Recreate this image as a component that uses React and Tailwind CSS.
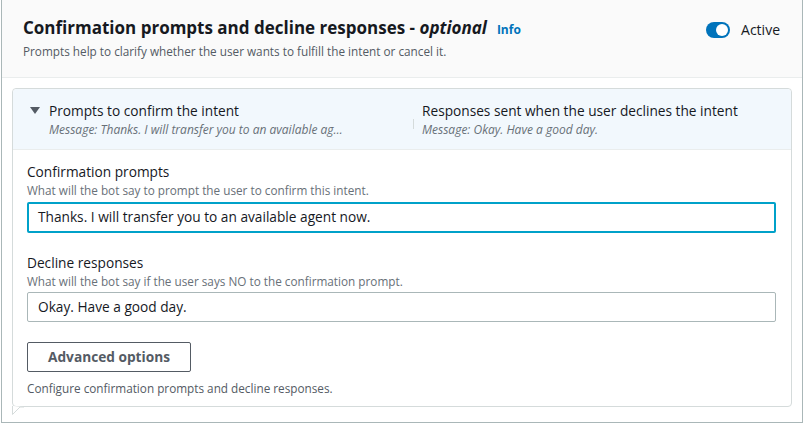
import React from 'react'

const font = { fontFamily: '"Open Sans", "Noto Sans", sans-serif' }

const Toggle = () => (
  <span className="relative inline-flex h-[16px] w-[24px] items-center rounded-full bg-[#0073bb]">
    <span className="absolute right-[2px] h-[12px] w-[12px] rounded-full bg-white" />
  </span>
)

const App = () => {
  return (
    <div className="h-[424px] w-[805px] bg-white" style={font}>
      <div className="ml-px h-[423px] w-[802px] border-x border-b border-[#aab7b8] bg-white">
        {/* header */}
        <div className="flex h-[78px] items-start justify-between border-b border-[#eaeded] bg-[#fafafa] pl-[21px] pr-[22px] pt-[15px]">
          <div>
            <h2 className="flex items-baseline text-[17px] font-bold leading-[26px] text-[#16191f]">
              Confirmation prompts and decline responses -&nbsp;<i>optional</i>
              <span className="ml-[10px] text-[12px] font-bold text-[#0073bb]">Info</span>
            </h2>
            <p className="text-[11.75px] leading-[16px] text-[#545b64]">
              Prompts help to clarify whether the user wants to fulfill the intent or cancel it.
            </p>
          </div>
          <div className="mt-[4px] flex items-center gap-[11px] text-[14px] text-[#16191f]">
            <Toggle />
            <span>Active</span>
          </div>
        </div>

        {/* card */}
        <div className="relative ml-[10px] mt-[10px] w-[780px] rounded-[4px] border border-[#d5dbdb] bg-white">
          <div className="flex h-[61px] items-start rounded-t-[4px] border-b border-[#eaeded] bg-[#f2f8fd] pt-[12px]">
            <div className="flex w-[400px] pl-[17px]">
              <span className="mr-[9px] mt-[6px] h-0 w-0 border-x-[5px] border-t-[7px] border-x-transparent border-t-[#545b64]" />
              <div>
                <div className="text-[13.7px] leading-[20px] text-[#16191f]">Prompts to confirm the intent</div>
                <div className="text-[12px] italic leading-[18px] text-[#687078]">
                  Message: Thanks. I will transfer you to an available ag…
                </div>
              </div>
            </div>
            <span className="mt-[18px] h-[10px] w-px bg-[#d5dbdb]" />
            <div className="pl-[8px]">
              <div className="text-[13.7px] leading-[20px] text-[#16191f]">Responses sent when the user declines the intent</div>
              <div className="text-[12px] italic leading-[18px] text-[#687078]">Message: Okay. Have a good day.</div>
            </div>
          </div>

          <div className="px-[14px] pb-[10px] pt-[12px]">
            <div className="text-[13.7px] leading-[20px] text-[#16191f]">Confirmation prompts</div>
            <div className="text-[11.75px] leading-[16px] text-[#687078]">
              What will the bot say to prompt the user to confirm this intent.
            </div>
            <div className="mt-[4px] flex h-[31px] w-[749px] items-center rounded-[2px] border-2 border-[#00a1c9] px-[9px] text-[13.7px] text-[#16191f]">
              Thanks. I will transfer you to an available agent now.
            </div>

            <div className="mt-[20px] text-[13.7px] leading-[20px] text-[#16191f]">Decline responses</div>
            <div className="text-[11.75px] leading-[16px] text-[#687078]">
              What will the bot say if the user says NO to the confirmation prompt.
            </div>
            <div className="mt-[3px] flex h-[30px] w-[749px] items-center rounded-[2px] border border-[#aab7b8] px-[10px] text-[13.7px] text-[#16191f]">
              Okay. Have a good day.
            </div>

            <button className="mt-[20px] block h-[30px] w-[164px] rounded-[2px] border border-[#545b64] text-[13.7px] font-bold text-[#545b64]">
              Advanced options
            </button>
            <div className="mt-[8px] text-[11.75px] leading-[16px] text-[#545b64]">
              Configure confirmation prompts and decline responses.
            </div>
          </div>

          {/* tail */}
          <svg className="absolute left-[-1px] top-full" width="12" height="9" viewBox="0 0 12 9">
            <path d="M0.5 0 L0.5 8.5 L8 1 L12 1" fill="white" stroke="#d5dbdb" />
          </svg>
        </div>
      </div>
    </div>
  )
}

export default App
